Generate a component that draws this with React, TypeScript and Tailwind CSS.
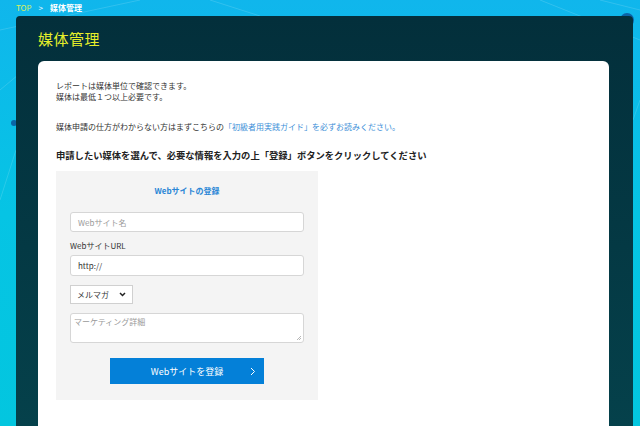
import React from 'react';

const font = { fontFamily: '"Noto Sans CJK JP", "Noto Sans", sans-serif' };

const Backdrop: React.FC = () => (
  <svg className="absolute inset-0 h-full w-full" viewBox="0 0 640 426" preserveAspectRatio="none">
    <g stroke="#ffffff" strokeOpacity="0.18" strokeWidth="0.8" fill="none">
      <line x1="0" y1="30" x2="140" y2="0" />
      <line x1="0" y1="90" x2="60" y2="40" />
      <line x1="210" y1="0" x2="260" y2="16" />
      <line x1="540" y1="0" x2="640" y2="40" />
      <line x1="600" y1="0" x2="640" y2="10" />
      <line x1="0" y1="200" x2="16" y2="150" />
      <line x1="633" y1="120" x2="640" y2="100" />
    </g>
    <g fill="#0a3f8a" fillOpacity="0.7">
      <circle cx="627" cy="20" r="7" />
      <circle cx="14" cy="123" r="3" />
    </g>
  </svg>
);

const App: React.FC = () => {
  return (
    <div
      className="relative h-[426px] w-[640px] overflow-hidden bg-gradient-to-b from-[#10b6ec] via-[#06c4e4] to-[#03c6df]"
      style={font}
    >
      <Backdrop />
      <div className="relative flex h-full flex-col">
        {/* breadcrumb */}
        <div className="flex h-4 items-center gap-[7px] pl-4 text-[8px] leading-none">
          <span className="text-[#dcef5a]">TOP</span>
          <span className="text-white">&gt;</span>
          <span className="font-bold text-white">媒体管理</span>
        </div>

        {/* dark panel */}
        <div className="ml-4 mr-[7px] flex flex-1 flex-col rounded-tl-[4px] rounded-tr-[4px] bg-gradient-to-b from-[#032f3b] to-[#05414b] pl-[22px] pr-6">
          <h1 className="flex h-[45px] items-center pb-[1px] text-[15px] leading-none tracking-[0.5px] text-[#e6ef2a]">媒体管理</h1>

          <div className="flex-1 rounded-t-[6px] bg-white pl-[18px] pt-[19px] text-[8px] leading-[11px] text-[#333]">
            <p>レポートは媒体単位で確認できます。</p>
            <p>媒体は最低１つ以上必要です。</p>
            <p className="mt-[19px]">
              媒体申請の仕方がわからない方はまずこちらの<span className="text-[#3d8fd8]">「初級者用実践ガイド」を必ずお読みください。</span>
            </p>
            <h2 className="mt-[17px] text-[9.3px] font-bold leading-[12px] text-[#222]">
              申請したい媒体を選んで、必要な情報を入力の上「登録」ボタンをクリックしてください
            </h2>

            <div className="mt-[10px] flex h-[229px] w-[262px] flex-col bg-[#f4f4f4] px-[14px] pt-[14px]">
              <p className="text-center text-[8px] font-bold leading-[11px] text-[#2a86d6]">Webサイトの登録</p>
              <div className="mt-[16px] flex h-5 items-center rounded-[3px] border border-[#d6d6d6] bg-white px-[7px] text-[8px] text-[#9a9a9a]">
                Webサイト名
              </div>
              <p className="mt-[8px] text-[8px] leading-[11px] text-[#333]">WebサイトURL</p>
              <div className="mt-[4px] flex h-[21px] items-center rounded-[3px] border border-[#d6d6d6] bg-white px-[7px] text-[8px] text-[#333]">
                http://
              </div>
              <div className="mt-[9px] flex h-[19px] w-[63px] items-center justify-between border border-[#d0d0d0] bg-white pl-[6px] pr-[6px] text-[8px] text-[#333]">
                <span>メルマガ</span>
                <svg width="7" height="5" viewBox="0 0 7 5">
                  <path d="M1 1 L3.5 3.5 L6 1" stroke="#222" strokeWidth="1.5" fill="none" />
                </svg>
              </div>
              <div className="relative mt-[9px] h-[30px] rounded-[3px] border border-[#d6d6d6] bg-white px-[3px] pt-[2px] text-[8px] leading-[11px] text-[#9a9a9a]">
                マーケティング詳細
                <svg className="absolute bottom-[1px] right-[1px]" width="6" height="6" viewBox="0 0 6 6">
                  <path d="M5 1 L1 5 M5 3 L3 5" stroke="#999" strokeWidth="0.7" />
                </svg>
              </div>
              <div className="mt-[15px] flex justify-center">
                <button className="relative flex h-[26px] w-[154px] items-center justify-center bg-[#0480d8] text-[9px] text-white">
                  Webサイトを登録
                  <svg className="absolute right-[8px]" width="6" height="9" viewBox="0 0 6 9">
                    <path d="M1 1 L4.5 4.5 L1 8" stroke="#fff" strokeWidth="1" fill="none" />
                  </svg>
                </button>
              </div>
            </div>
          </div>
        </div>
      </div>
    </div>
  );
};

export default App;
